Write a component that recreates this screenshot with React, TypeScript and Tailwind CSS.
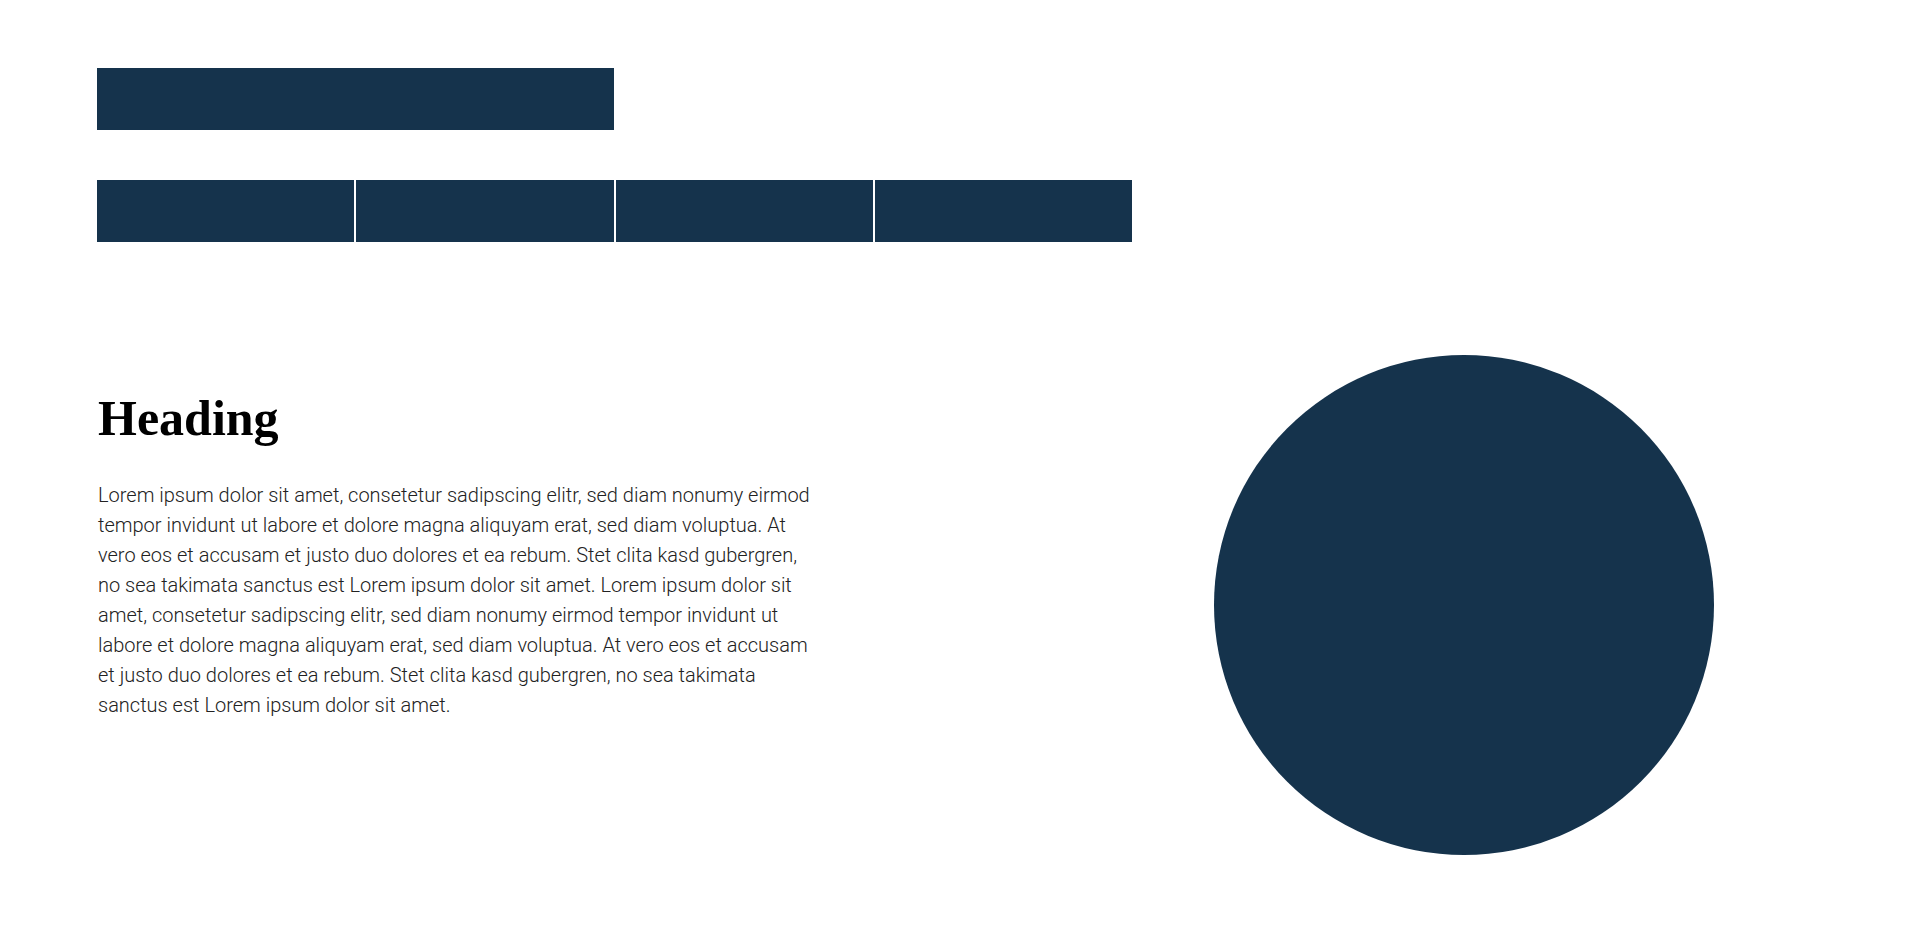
import React from "react";

export default function App() {
  return (
    <div className="min-h-[943px] w-full bg-white px-[97px] pt-[68px]">
      <div className="grid w-[1035px] grid-cols-4 gap-x-[2px]">
        <div className="col-span-2 h-[62px] bg-[#15334c]" />
      </div>
      <div className="mt-[50px] grid w-[1035px] grid-cols-4 gap-x-[2px]">
        <div className="h-[62px] bg-[#15334c]" />
        <div className="h-[62px] bg-[#15334c]" />
        <div className="h-[62px] bg-[#15334c]" />
        <div className="h-[62px] bg-[#15334c]" />
      </div>
      <div className="mt-[113px] flex items-start">
        <div className="w-[720px] pl-[1px] pt-[33px]">
          <h1
            className="text-[50px] font-bold leading-[60px] text-black"
            style={{ fontFamily: '"Liberation Serif", "Times New Roman", serif' }}
          >
            Heading
          </h1>
          <p
            className="mt-[32px] text-[20px] font-light leading-[30px] text-[#222]"
            style={{ fontFamily: 'Roboto, "Liberation Sans", sans-serif' }}
          >
            Lorem ipsum dolor sit amet, consetetur sadipscing elitr, sed diam nonumy eirmod tempor invidunt ut labore et dolore magna aliquyam erat, sed diam voluptua. At vero eos et accusam et justo duo dolores et ea rebum. Stet clita kasd gubergren, no sea takimata sanctus est Lorem ipsum dolor sit amet. Lorem ipsum dolor sit amet, consetetur sadipscing elitr, sed diam nonumy eirmod tempor invidunt ut labore et dolore magna aliquyam erat, sed diam voluptua. At vero eos et accusam et justo duo dolores et ea rebum. Stet clita kasd gubergren, no sea takimata sanctus est Lorem ipsum dolor sit amet.
          </p>
        </div>
        <div className="ml-[397px] h-[500px] w-[500px] shrink-0 rounded-full bg-[#15334c]" />
      </div>
    </div>
  );
}
